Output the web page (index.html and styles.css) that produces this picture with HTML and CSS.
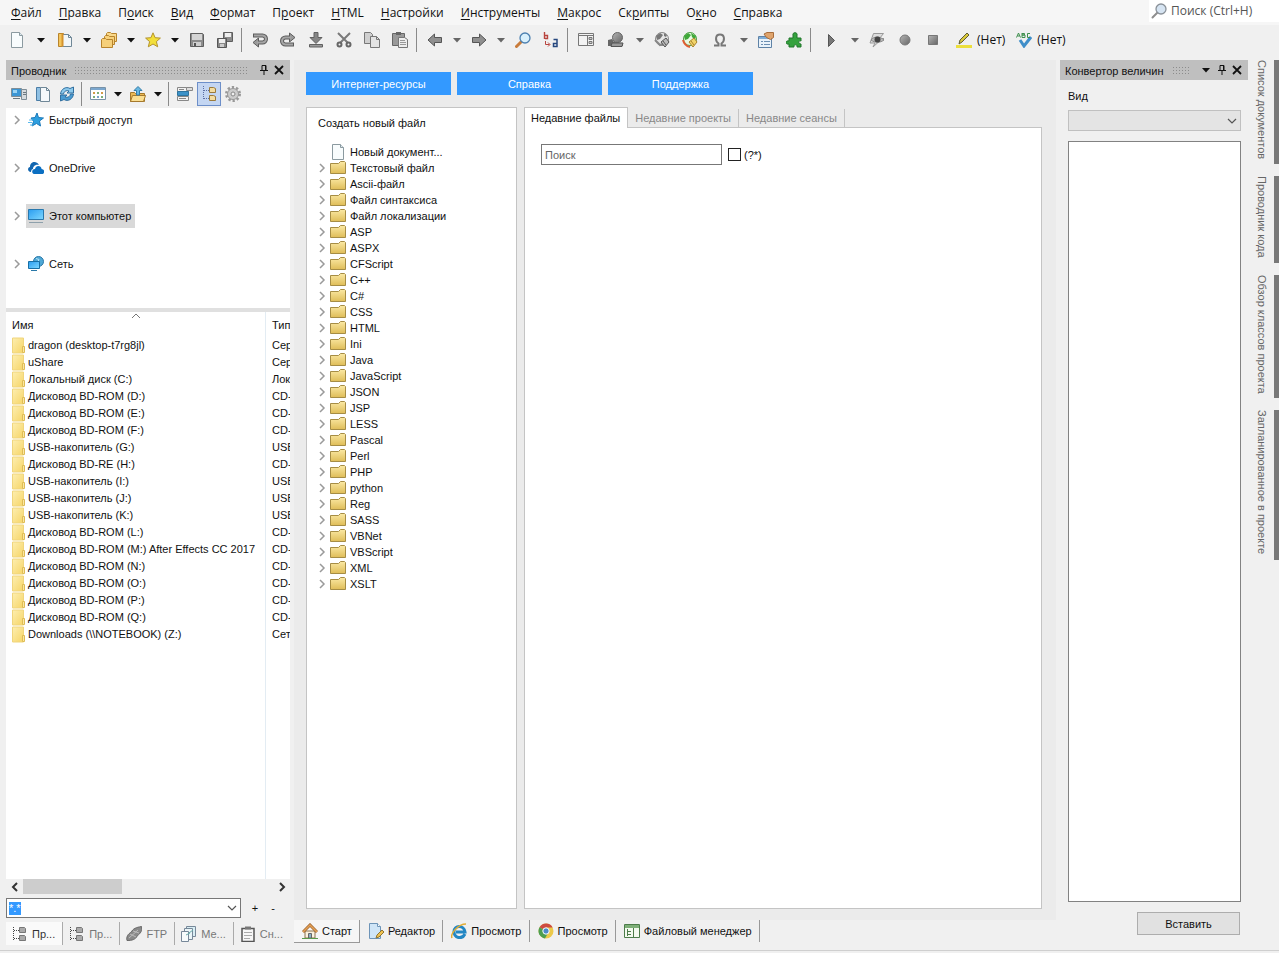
FILE: index.html
```
<!DOCTYPE html>
<html lang="ru">
<head>
    <meta charset="UTF-8">
    <meta name="viewport" content="width=device-width, initial-scale=1.0">
    <title>Редактор</title>
    <link rel="stylesheet" href="styles.css">
</head>
<body>
    <svg class="sprite" width="0" height="0">
        <defs>
            <linearGradient id="gold" x1="0" y1="0" x2="0" y2="1"><stop offset="0" stop-color="#fbe9a5"/><stop offset="1" stop-color="#dfbd58"/></linearGradient>
            <linearGradient id="pale" x1="0" y1="0" x2="1" y2="1"><stop offset="0" stop-color="#fdeeb0"/><stop offset="1" stop-color="#f6d567"/></linearGradient>
            <linearGradient id="grey" x1="0" y1="0" x2="1" y2="1"><stop offset="0" stop-color="#b5b5b5"/><stop offset="1" stop-color="#666"/></linearGradient>
            <linearGradient id="screen" x1="0" y1="0" x2="1" y2="1"><stop offset="0" stop-color="#2a9df0"/><stop offset="1" stop-color="#7fd8ff"/></linearGradient>
        </defs>
        <symbol id="i-new" viewBox="0 0 16 16"><path d="M2.500 .5h8l3 3v12h-11z" fill="#f8fcfd" stroke="#8b9aa0"/><path d="M10.500 .5v3h3" fill="#dfeaf0" stroke="#8b9aa0"/></symbol>
        <symbol id="i-open" viewBox="0 0 16 16"><path d="M1.500 1.500h5v13h-5z" fill="#f4c55c" stroke="#b8842c"/><path d="M5.500 2.500h6l3 3v9h-9z" fill="#f2f6f8" stroke="#6f8797"/><path d="M11.500 2.500v3h3" fill="none" stroke="#6f8797"/><path d="M5.500 1.500v13" stroke="#d4922c" stroke-width="2"/></symbol>
        <symbol id="i-folders" viewBox="0 0 16 16"><path d="M5.500 1.500l1-1h3l1 1h5v8h-10z" fill="#f9d88a" stroke="#b8842c"/><path d="M3.500 4.500l1-1h3l1 1h5v8h-10z" fill="#f8d27c" stroke="#b8842c"/><path d="M.5 7.500l1-1h3l1 1h6v8h-11z" fill="#f6d07a" stroke="#b8842c"/></symbol>
        <symbol id="i-star" viewBox="0 0 16 16"><path d="M8 .8l2.100 4.900 5.300.4-4 3.500 1.300 5.200L8 12l-4.700 2.800 1.300-5.200-4-3.500 5.300-.4z" fill="#f3df3a" stroke="#b4932c"/></symbol>
        <symbol id="i-save" viewBox="0 0 16 16"><path d="M1.500 1.500h12l1 1v12h-13z" fill="#8c8c8c" stroke="#5e5e5e"/><path d="M3 2h10v6H3z" fill="#d4d4d4"/><path d="M4 10h8v4H4z" fill="#cfcfcf"/><path d="M5 11h2v3H5z" fill="#555"/></symbol>
        <symbol id="i-saveall" viewBox="0 0 16 16"><path d="M6.500 .5h9v9h-9z" fill="#8c8c8c" stroke="#5e5e5e"/><path d="M8 1h6v4H8z" fill="#eee"/><path d="M.5 6.500h9v9h-9z" fill="#888" stroke="#555"/><path d="M2 7h6v4H2z" fill="#eee"/><path d="M3 12h4v3H3z" fill="#ccc"/></symbol>
        <symbol id="i-undo" viewBox="0 0 16 16"><path d="M1 3.500h9.500a3 3 0 0 1 0 7H6" fill="none" stroke="#5c5c5c" stroke-width="4"/><path d="M6.500 6v9L1 10.500z" fill="#9a9a9a" stroke="#5c5c5c"/><path d="M2 3.500h8.500a3 3 0 0 1 0 7H5" fill="none" stroke="#a5a5a5" stroke-width="2"/></symbol>
        <symbol id="i-redo" viewBox="0 0 16 16"><path d="M14 12.500H5.500a3 3 0 0 1 0-7H10" fill="none" stroke="#5c5c5c" stroke-width="4"/><path d="M9.500 1v9L15 5.500z" fill="#9a9a9a" stroke="#5c5c5c"/><path d="M13 12.500H5.500a3 3 0 0 1 0-7H11" fill="none" stroke="#a5a5a5" stroke-width="2"/></symbol>
        <symbol id="i-down" viewBox="0 0 16 16"><path d="M6 .5h4v5h4L8 11.500 2 5.500h4z" fill="#858585" stroke="#606060"/><path d="M1.500 12.500h13v2.500h-13z" fill="#9a9a9a" stroke="#606060"/></symbol>
        <symbol id="i-cut" viewBox="0 0 16 16"><path d="M2 1l10 10M14 1L4 11" stroke="#7a7a7a" stroke-width="2"/><circle cx="3.500" cy="12.500" r="2" fill="none" stroke="#666" stroke-width="2"/><circle cx="12.500" cy="12.500" r="2" fill="none" stroke="#666" stroke-width="2"/></symbol>
        <symbol id="i-copy" viewBox="0 0 16 16"><path d="M.5 .5h6l2 2v9h-8z" fill="#cfcfcf" stroke="#777"/><path d="M6.500 4.500h6l3 3v8h-9z" fill="#e3e3e3" stroke="#777"/><path d="M12.500 4.500v3h3" fill="none" stroke="#777"/></symbol>
        <symbol id="i-paste" viewBox="0 0 16 16"><path d="M.5 1.500h12v12H.5z" fill="#999" stroke="#666"/><path d="M4 0h5v3H4z" fill="#666"/><path d="M6.500 5.500h6l3 2v8h-9z" fill="#eee" stroke="#777"/><path d="M8 8.500h5M8 10.500h6M8 12.500h6" stroke="#999"/></symbol>
        <symbol id="i-back" viewBox="0 0 16 16"><path d="M7.500 2v3.500h7v5h-7V14L1 8z" fill="#8f8f8f" stroke="#555"/></symbol>
        <symbol id="i-fwd" viewBox="0 0 16 16"><path d="M8.500 2v3.500h-7v5h7V14L15 8z" fill="#8f8f8f" stroke="#555"/></symbol>
        <symbol id="i-find" viewBox="0 0 16 16"><path d="M1.500 14.500l5-5" stroke="#c97c3b" stroke-width="3" stroke-linecap="round"/><circle cx="10" cy="6" r="5" fill="#d9f0fc" stroke="#4d80b0" stroke-width="1.300"/></symbol>
        <symbol id="i-lens" viewBox="0 0 16 16"><path d="M1.500 14.500l5-5" stroke="#8e8e8e" stroke-width="2" stroke-linecap="round"/><circle cx="10" cy="6" r="5" fill="#d6e4f2" stroke="#8a9199" stroke-width="1.300"/></symbol>
        <symbol id="i-ba" viewBox="0 0 16 16"><path d="M1.500 0v7M2 3.500h2.500v3H2" fill="none" stroke="#b8443e" stroke-width="1.400"/><path d="M2.500 9v3.500h4M5 10.500l2 2-2 2" fill="none" stroke="#b8443e"/><path d="M10.500 7.500H14v7h-3.500v-3H14" fill="none" stroke="#26477e" stroke-width="1.500"/></symbol>
        <symbol id="i-layout" viewBox="0 0 16 16"><path d="M.5 1.500h15v12H.5z" fill="#f3f3f3" stroke="#777"/><path d="M1 3.500h14M9.500 4v9" stroke="#777"/><path d="M11 5.500h3v2h-3zM11 9.500h3v2h-3z" fill="#ccc" stroke="#777"/></symbol>
        <symbol id="i-user" viewBox="0 0 16 16"><path d="M0 8l4-1 2 3 9 1v3H0z" fill="#666"/><circle cx="9.500" cy="5.500" r="5" fill="url(#grey)" stroke="#666"/><path d="M4 11h11l-1 3.500H3z" fill="#999" stroke="#555"/></symbol>
        <symbol id="i-globe" viewBox="0 0 16 16"><circle cx="8" cy="7" r="6.500" fill="#e5e5e5" stroke="#888"/><path d="M2 4l4-3 3 2-3 4-3 1zM10 1l3 2-1 2-2-1z" fill="#777"/><path d="M1 8l5 5 3-1" fill="none" stroke="#888" stroke-width="2"/><path d="M7 10l5-4 3 4-4 5z" fill="#bbb" stroke="#555"/><path d="M9 9l3 4" stroke="#555"/></symbol>
        <symbol id="i-globe2" viewBox="0 0 16 16"><circle cx="8" cy="7" r="6.500" fill="#e9fae3" stroke="#4b9f42"/><path d="M2 4l4-3 3 2-3 4-3 1zM9 1l5 3-1 4-3-3z" fill="#3fa83a"/><path d="M1 8c1 4 3 6 7 7" fill="none" stroke="#df5e32" stroke-width="2"/><path d="M7 10l5-4 3 4-4 5z" fill="#f1d46a" stroke="#a9822a"/><path d="M9 9l3 4" stroke="#a9822a"/></symbol>
        <symbol id="i-omega" viewBox="0 0 16 16"><path d="M2 13.500h4.500v-2C3 9 3 2.500 8 2.500s5 6.500 1.500 9v2H14" fill="none" stroke="#777" stroke-width="2"/></symbol>
        <symbol id="i-props" viewBox="0 0 16 16"><path d="M.5 4.500h13v11H.5z" fill="#e9f2fa" stroke="#5e82a6"/><path d="M1 5h12v2H1z" fill="#7faed8"/><path d="M3 9.500h2M3 12.500h2M6 9.500h6M6 12.500h6" stroke="#6c8fb2"/><path d="M6 2l3-1.500h6.500v5l-3 2-4-2z" fill="#dfa46d" stroke="#a96d3b"/></symbol>
        <symbol id="i-puzzle" viewBox="0 0 16 16"><path d="M7 6V3c-1-3 5-3 4 0v3h4v3c-3-1-3 3 0 3v3h-4c1-3-4-3-3 0H3v-3c-4 1-4-4 0-3V6z" fill="#35a23e" stroke="#21762b"/></symbol>
        <symbol id="i-play" viewBox="0 0 16 16"><path d="M5.500 2.500v12l6-6z" fill="#777" stroke="#555"/></symbol>
        <symbol id="i-eye" viewBox="0 0 16 16"><path d="M4.500 1.500h10l-4 5H15l-6 4-5 4.500 2-4H1z" fill="#ddd" stroke="#999"/><path d="M2 8c3-4 9-4 13 0-4 3-9 3-13 0z" fill="#bbb" stroke="#888"/><circle cx="8.500" cy="7.500" r="3" fill="#444"/></symbol>
        <symbol id="i-rec" viewBox="0 0 16 16"><circle cx="8" cy="8" r="5" fill="url(#grey)" stroke="#777"/></symbol>
        <symbol id="i-stop" viewBox="0 0 16 16"><path d="M3.500 3.500h9v9h-9z" fill="url(#grey)" stroke="#777"/></symbol>
        <symbol id="i-marker" viewBox="0 0 16 16"><path d="M0 13h16v3H0z" fill="#ecdf3c"/><path d="M3 12l1-4 7-7 2 2-7 7z" fill="#d9c83a" stroke="#605c35"/></symbol>
        <symbol id="i-abc" viewBox="0 0 16 16"><path d="M4 8l4 6 7-9" fill="none" stroke="#3f8ec9" stroke-width="3"/><path d="M.5 5.500L2.500 1l2 4.500M1.500 4h2M6 1v4.500h3V3H6h2.500V1.500H6M14 1.500h-2.500v4H14" fill="none" stroke="#3d8e4d"/></symbol>
        <symbol id="i-pin" viewBox="0 0 10 12"><path d="M3 1.500h4v5H3zM1 6.500h8M5 7v4M6.500 1v6" fill="none" stroke="#111"/></symbol>
        <symbol id="i-close" viewBox="0 0 10 10"><path d="M1 1l8 8M9 1L1 9" stroke="#111" stroke-width="1.800"/></symbol>
        <symbol id="i-pc" viewBox="0 0 16 16"><path d="M.5 2.500h10v8H.5z" fill="#3c96d4" stroke="#7f8d96"/><path d="M2 4h4v3H2z" fill="#9cd4f4"/><path d="M10.500 3.500h5v10h-5z" fill="#d5dade" stroke="#7f8d96"/><path d="M12 6.500h3M12 8.500h3M2 12.500h7" stroke="#6b7880"/></symbol>
        <symbol id="i-docs" viewBox="0 0 16 16"><path d="M1.500 1.500h4v13h-4z" fill="#8fc0e3" stroke="#4b7da6"/><path d="M5.500 1.500h6l3 3v11h-9z" fill="#f4f8fb" stroke="#6f8797"/><path d="M11.500 1.500v3h3" fill="none" stroke="#6f8797"/></symbol>
        <symbol id="i-refresh" viewBox="0 0 16 16"><path d="M1.500 8C2 3 7 0 11 2.500L14.500 1v6H8l2-2C7 4 5 5.500 4.500 8z" fill="#8cc9ec" stroke="#316f9f"/><path d="M14.500 8C14 13 9 16 5 13.500L1.500 15V9H8l-2 2c3 1 5-.5 5.500-3z" fill="#499bd2" stroke="#316f9f"/></symbol>
        <symbol id="i-view" viewBox="0 0 16 16"><path d="M.5 1.500h15v12H.5z" fill="#fff" stroke="#7892a8"/><path d="M1 2h14v2H1z" fill="#7ba7ce"/><path d="M3 6h2v2H3zM11 6h2v2h-2z" fill="#d39b48"/><path d="M7 6h2v2H7zM3 10h2v2H3zM11 10h2v2h-2z" fill="#7cae79"/><path d="M7 10h2v2H7z" fill="#79a3cb"/></symbol>
        <symbol id="i-up" viewBox="0 0 16 16"><path d="M.5 6.500h4l1 1h9v8h-14z" fill="#eab955" stroke="#a5792c"/><path d="M.5 15.500l2-6h13l-2 6z" fill="#fbdf92" stroke="#a5792c"/><path d="M6.500 9V4.500H4L8 .5l4 4H9.500V9z" fill="#67b7e1" stroke="#347ca7"/></symbol>
        <symbol id="i-filter" viewBox="0 0 16 16"><path d="M.5 1.500h11v4H.5zM.5 10.500h11v4H.5z" fill="#f2f2f2" stroke="#888"/><path d="M.5 5.500h11v4H.5z" fill="#3c92c8" stroke="#2e749f"/><path d="M9.500 1.500h6v3h-6z" fill="#ddd" stroke="#888"/><path d="M2 12.500h7M2 3.500h5" stroke="#888"/></symbol>
        <symbol id="i-tree" viewBox="0 0 16 16"><path d="M2.500 0v14M3 4.500h5M3 12.500h5" stroke="#5d6fa4" stroke-dasharray="1 1"/><path d="M8.500 1.500h4l2 1v4h-6zM8.500 9.500h4l2 1v4h-6z" fill="#f3dc9f" stroke="#9b7a3b"/></symbol>
        <symbol id="i-treegrey" viewBox="0 0 16 16"><path d="M1.500 1v13M2 4.500h5M2 12.500h5" stroke="#444" stroke-dasharray="1 1"/><path d="M7.500 1.500h5l1 1v4h-6zM7.500 9.500h5l1 1v4h-6z" fill="#aaa" stroke="#777"/></symbol>
        <symbol id="i-gear" viewBox="0 0 16 16"><circle cx="8" cy="8" r="6.500" fill="none" stroke="#999" stroke-width="3" stroke-dasharray="2.200 1.900"/><circle cx="8" cy="8" r="5.500" fill="#ccc" stroke="#999"/><circle cx="8" cy="8" r="2" fill="#f0f0f0" stroke="#888"/></symbol>
        <symbol id="i-quick" viewBox="0 0 16 16"><path d="M9 1l1.500 4.500 5 .5-4 3 1 5-4-2.500L4 14l1.500-4.500L3 6l4-.5z" fill="#2d9fdf" stroke="#1b79ba"/><path d="M1 8h4M0 10.500h4M2 13h3" stroke="#5bb9ec"/></symbol>
        <symbol id="i-cloud" viewBox="0 0 16 16"><path d="M3 12C-1 12-.5 7 2 7c0-5 6-7 9-2-4-1-6 2-6 4-1 0-2 1-2 3z" fill="#1166b0"/><path d="M6 14c-3-1-2-5 1-5 1-5 7-3 6.500 0 3.500 0 3.500 5 .5 5z" fill="#0b6fc2"/></symbol>
        <symbol id="i-monitor" viewBox="0 0 16 16"><path d="M.5 1.500h15v10H.5z" fill="url(#screen)" stroke="#2978ad"/><path d="M1 14.500h14" stroke="#8ea0ab"/></symbol>
        <symbol id="i-net" viewBox="0 0 16 16"><circle cx="10.500" cy="5.500" r="5" fill="#4fa8d6" stroke="#2978a8"/><path d="M8 2.500l3 1-1 2" fill="none" stroke="#b6e3f6"/><path d="M.5 5.500h11v7H.5z" fill="url(#screen)" stroke="#176fa5"/><path d="M3 14.500h6" stroke="#2978a8"/></symbol>
        <symbol id="i-folder" viewBox="0 0 16 16"><path d="M.5 3.500h8l2-2h4l1 1v11H.5z" fill="url(#gold)" stroke="#a68d45"/></symbol>
        <symbol id="i-drive" viewBox="0 0 14 17"><path d="M.5 1h11v15H.5z" fill="url(#pale)" stroke="#f0d57c"/><path d="M10.500 9.500h2v6h-2z" fill="#fbe7a0" stroke="#dfbc55"/></symbol>
        <symbol id="i-chev" viewBox="0 0 8 10"><path d="M2 1l4 4-4 4" fill="none" stroke="#9a9a9a" stroke-width="1.500"/></symbol>
        <symbol id="i-chevd" viewBox="0 0 10 10"><path d="M1 3l4 4 4-4" fill="none" stroke="#555" stroke-width="1.200"/></symbol>
        <symbol id="i-chevu" viewBox="0 0 10 6"><path d="M1 5l4-4 4 4" fill="none" stroke="#777"/></symbol>
        <symbol id="i-left" viewBox="0 0 8 10"><path d="M6 1L2 5l4 4" fill="none" stroke="#333" stroke-width="2"/></symbol>
        <symbol id="i-right" viewBox="0 0 8 10"><path d="M2 1l4 4-4 4" fill="none" stroke="#333" stroke-width="2"/></symbol>
        <symbol id="i-caret" viewBox="0 0 8 5"><path d="M0 0h8L4 4.500z" fill="currentColor"/></symbol>
        <symbol id="i-ftp" viewBox="0 0 16 16"><path d="M1 14.500c-1-3 1-7 4-8 2-4 5-5 10.500-6 1 4-1 7-4 9-2 4-5 5-10.500 5z" fill="#8a8a8a" stroke="#666"/><path d="M4 8l6 3M7 5l6 2M3 12l9-8" stroke="#bbb"/></symbol>
        <symbol id="i-pages" viewBox="0 0 16 16"><path d="M5.500 .5h9v10h-9z" fill="#d9eef4" stroke="#789"/><path d="M3.500 2.500h8v11h-8z" fill="#eaf5f8" stroke="#789"/><path d="M.5 5.500h7v10h-7z" fill="#f7fbfc" stroke="#789"/><path d="M8 7l4-3M5 9l4-2" stroke="#6aa"/></symbol>
        <symbol id="i-clip" viewBox="0 0 16 16"><path d="M2 2.500h12v13H2z" fill="#f7f7f7" stroke="#555" stroke-width="1.500"/><path d="M5 .5h6v3H5z" fill="#777"/><path d="M4 6.500h8M4 9.500h8M4 12.500h6" stroke="#aaa"/></symbol>
        <symbol id="i-home" viewBox="0 0 16 16"><path d="M3 8h10v7H3z" fill="#fbf2df" stroke="#8c7350"/><path d="M6.500 10.500h3V15h-3z" fill="#8db0c7" stroke="#666"/><path d="M1 9l7-7 7 7" fill="none" stroke="#a06733" stroke-width="3"/><path d="M1 9l7-7 7 7" fill="none" stroke="#e5a155" stroke-width="1.500"/><path d="M0 15.500h16" stroke="#5a9a4b"/></symbol>
        <symbol id="i-edit" viewBox="0 0 16 16"><path d="M1.500 .5h8l3 3v12h-11z" fill="#cfe5f7" stroke="#6d94b8"/><path d="M9.500 .5v3h3" fill="#fff" stroke="#6d94b8"/><path d="M8 15l1-3 5-5 2 2-5 5z" fill="#f0c24f" stroke="#8f7430"/></symbol>
        <symbol id="i-ie" viewBox="0 0 16 16"><path d="M14 11c-3 6-11 4-11-2.500s10-7 11 .5H5" fill="none" stroke="#2387c4" stroke-width="3"/><path d="M1 15C-1 11 7 1 15 1" fill="none" stroke="#e2ad35" stroke-width="1.500"/></symbol>
        <symbol id="i-chrome" viewBox="0 0 16 16"><circle cx="8" cy="8" r="7.500" fill="#ecc94a"/><path d="M8 8L1.500 4.200A7.500 7.500 0 0 1 14.700 4.500H8z" fill="#ce4b42"/><path d="M8 8L1.500 4.200A7.500 7.500 0 0 0 7 15.400L10 10z" fill="#4c9e50"/><circle cx="8" cy="8" r="3.200" fill="#4c8bc9" stroke="#fff"/></symbol>
        <symbol id="i-fm" viewBox="0 0 16 16"><path d="M.5 1.500h15v13H.5z" fill="#f4faef" stroke="#4d7d4a"/><path d="M1 2h14v3H1z" fill="#7eaf78"/><path d="M9.500 5v9M3.500 6v7M4 8.500h3M4 11.500h3" stroke="#4d7d4a"/></symbol>
    </svg>

    <header class="menubar">
        <nav class="menu">
            <a href="#"><u>Ф</u>айл</a>
            <a href="#"><u>П</u>равка</a>
            <a href="#">П<u>о</u>иск</a>
            <a href="#"><u>В</u>ид</a>
            <a href="#"><u>Ф</u>ормат</a>
            <a href="#">П<u>р</u>оект</a>
            <a href="#"><u>H</u>TML</a>
            <a href="#"><u>Н</u>астройки</a>
            <a href="#"><u>И</u>нструменты</a>
            <a href="#"><u>М</u>акрос</a>
            <a href="#">Ск<u>р</u>ипты</a>
            <a href="#">О<u>к</u>но</a>
            <a href="#"><u>С</u>правка</a>
        </nav>
        <label class="quick-search">
            <svg class="icon"><use href="#i-lens"/></svg>
            <input type="text" placeholder="Поиск (Ctrl+H)" aria-label="Поиск">
        </label>
    </header>

    <div class="toolbar" id="toolbar"></div>

    <main class="workspace">
        <section class="explorer">
            <div class="panel-title">
                <h2>Проводник</h2>
                <span class="grip"></span>
                <button class="pin" aria-label="Закрепить"><svg><use href="#i-pin"/></svg></button>
                <button class="close" aria-label="Закрыть"><svg><use href="#i-close"/></svg></button>
            </div>
            <div class="explorer-tools" id="explorerTools"></div>
            <ul class="places">
                <li><svg class="chev"><use href="#i-chev"/></svg><a href="#"><svg class="icon"><use href="#i-quick"/></svg>Быстрый доступ</a></li>
                <li><svg class="chev"><use href="#i-chev"/></svg><a href="#"><svg class="icon"><use href="#i-cloud"/></svg>OneDrive</a></li>
                <li><svg class="chev"><use href="#i-chev"/></svg><a href="#" class="selected"><svg class="icon"><use href="#i-monitor"/></svg>Этот компьютер</a></li>
                <li><svg class="chev"><use href="#i-chev"/></svg><a href="#"><svg class="icon"><use href="#i-net"/></svg>Сеть</a></li>
            </ul>
            <div class="files">
                <table>
                    <thead>
                        <tr><th class="name"><svg class="sort"><use href="#i-chevu"/></svg>Имя</th><th>Тип</th></tr>
                    </thead>
                    <tbody id="drives"></tbody>
                </table>
            </div>
            <div class="scrollbar">
                <button aria-label="Влево"><svg><use href="#i-left"/></svg></button>
                <span class="thumb"></span>
                <button aria-label="Вправо"><svg><use href="#i-right"/></svg></button>
            </div>
            <div class="mask">
                <div class="combo">
                    <input type="text" value="*.*" aria-label="Маска">
                    <button aria-label="Список масок"><svg><use href="#i-chevd"/></svg></button>
                </div>
                <button>+</button>
                <button>-</button>
            </div>
            <div class="panel-tabs">
                <button class="active"><svg class="icon"><use href="#i-treegrey"/></svg>Пр...</button>
                <button><svg class="icon"><use href="#i-treegrey"/></svg>Пр...</button>
                <button><svg class="icon"><use href="#i-ftp"/></svg>FTP</button>
                <button><svg class="icon"><use href="#i-pages"/></svg>Ме...</button>
                <button><svg class="icon"><use href="#i-clip"/></svg>Сн...</button>
            </div>
        </section>

        <section class="center">
            <div class="start">
                <div class="links">
                    <button>Интернет-ресурсы</button>
                    <button>Справка</button>
                    <button>Поддержка</button>
                </div>
                <div class="boxes">
                    <div class="create">
                        <h2>Создать новый файл</h2>
                        <ul id="types">
                            <li><span class="chev"></span><svg class="icon"><use href="#i-new"/></svg>Новый документ...</li>
                        </ul>
                    </div>
                    <div class="recent">
                        <div class="recent-tabs">
                            <button class="active">Недавние файлы</button>
                            <button>Недавние проекты</button>
                            <button>Недавние сеансы</button>
                        </div>
                        <div class="recent-body">
                            <input class="search" type="text" placeholder="Поиск" aria-label="Поиск">
                            <input type="checkbox" id="regex">
                            <label for="regex">(?*)</label>
                        </div>
                    </div>
                </div>
            </div>
            <div class="doc-tabs">
                <button class="active"><svg class="icon"><use href="#i-home"/></svg>Старт</button>
                <button><svg class="icon"><use href="#i-edit"/></svg>Редактор</button>
                <button><svg class="icon"><use href="#i-ie"/></svg>Просмотр</button>
                <button><svg class="icon"><use href="#i-chrome"/></svg>Просмотр</button>
                <button><svg class="icon"><use href="#i-fm"/></svg>Файловый менеджер</button>
            </div>
        </section>

        <section class="converter">
            <div class="panel-title">
                <h2>Конвертор величин</h2>
                <span class="grip"></span>
                <button class="pin" aria-label="Меню"><svg class="caret"><use href="#i-caret"/></svg></button>
                <button class="pin" aria-label="Закрепить"><svg><use href="#i-pin"/></svg></button>
                <button class="close" aria-label="Закрыть"><svg><use href="#i-close"/></svg></button>
            </div>
            <div class="converter-body">
                <label for="kind">Вид</label>
                <div class="select">
                    <select id="kind" disabled></select>
                    <svg><use href="#i-chevd"/></svg>
                </div>
                <div class="units"></div>
                <button class="insert">Вставить</button>
            </div>
        </section>

        <nav class="side-tabs">
            <button>Список документов</button>
            <button>Проводник кода</button>
            <button>Обзор классов проекта</button>
            <button>Запланированное в проекте</button>
        </nav>
    </main>
    <footer class="status"></footer>

    <script>
        // name = icon, + = wide icon, v = arrow, V = wide arrow, d = grey arrow, | = separator
        const tools = 'new V open v folders v star v save saveall | undo redo down cut copy paste | back d fwd d find ba | layout user+ d globe globe2 omega+ d props puzzle | play+ d eye rec stop';
        const explorerTools = 'pc docs refresh | view v up v | filter tree! gear';

        function renderTools(list){
            return list.split(' ').map(t => {
                if(t === '|') return '<span class="sep"></span>';
                if(t === 'v' || t === 'V' || t === 'd'){
                    let cls = t === 'V' ? ' wide' : t === 'd' ? ' dim' : '';
                    return `<button class="drop${cls}" aria-label="Ещё"><svg class="caret"><use href="#i-caret"/></svg></button>`;
                }
                let cls = t.endsWith('+') ? ' wide' : t.endsWith('!') ? ' on' : '';
                let name = t.replace(/[+!]/, '');
                return `<button class="tool${cls}" aria-label="${name}"><svg class="icon"><use href="#i-${name}"/></svg></button>`;
            }).join('');
        }
        document.getElementById('toolbar').innerHTML = renderTools(tools) +
            `<button class="hl"><svg class="icon"><use href="#i-marker"/></svg>(Нет)</button>
             <button class="hl"><svg class="icon"><use href="#i-abc"/></svg>(Нет)</button>`;
        document.getElementById('explorerTools').innerHTML = renderTools(explorerTools);

        const drives = [
            ['dragon (desktop-t7rg8jl)', 'Сервер'],
            ['uShare', 'Сервер'],
            ['Локальный диск (C:)', 'Локальный диск'],
            ['Дисковод BD-ROM (D:)', 'CD-дисковод'],
            ['Дисковод BD-ROM (E:)', 'CD-дисковод'],
            ['Дисковод BD-ROM (F:)', 'CD-дисковод'],
            ['USB-накопитель (G:)', 'USB-накопитель'],
            ['Дисковод BD-RE (H:)', 'CD-дисковод'],
            ['USB-накопитель (I:)', 'USB-накопитель'],
            ['USB-накопитель (J:)', 'USB-накопитель'],
            ['USB-накопитель (K:)', 'USB-накопитель'],
            ['Дисковод BD-ROM (L:)', 'CD-дисковод'],
            ['Дисковод BD-ROM (M:) After Effects CC 2017', 'CD-дисковод'],
            ['Дисковод BD-ROM (N:)', 'CD-дисковод'],
            ['Дисковод BD-ROM (O:)', 'CD-дисковод'],
            ['Дисковод BD-ROM (P:)', 'CD-дисковод'],
            ['Дисковод BD-ROM (Q:)', 'CD-дисковод'],
            ['Downloads (\\\\NOTEBOOK) (Z:)', 'Сетевой диск']
        ];
        document.getElementById('drives').innerHTML = drives.map(d =>
            `<tr><td><svg class="drive"><use href="#i-drive"/></svg>${d[0]}</td><td>${d[1]}</td></tr>`).join('');

        const types = ['Текстовый файл', 'Ascii-файл', 'Файл синтаксиса', 'Файл локализации', 'ASP', 'ASPX', 'CFScript',
            'C++', 'C#', 'CSS', 'HTML', 'Ini', 'Java', 'JavaScript', 'JSON', 'JSP', 'LESS', 'Pascal', 'Perl', 'PHP',
            'python', 'Reg', 'SASS', 'VBNet', 'VBScript', 'XML', 'XSLT'];
        document.getElementById('types').innerHTML += types.map(t =>
            `<li><svg class="chev"><use href="#i-chev"/></svg><svg class="icon"><use href="#i-folder"/></svg>${t}</li>`).join('');
    </script>
</body>
</html>
```
FILE: styles.css
```
*{
    margin: 0;
    padding: 0;
    box-sizing: border-box;
}
body{
    display: flex;
    flex-direction: column;
    height: 100vh;
    overflow: hidden;
    background: #f0f0f0;
    color: #111;
    font: 11px/16px "Liberation Sans", Arial, sans-serif;
}
button, input, select{
    font: inherit;
    color: inherit;
    border: none;
    background: none;
    border-radius: 0;
    outline: none;
}
a{
    color: inherit;
    text-decoration: none;
}
ul{
    list-style: none;
}
h2{
    font-size: 11px;
    font-weight: normal;
}
svg{
    display: block;
    flex: none;
}
.sprite{
    position: absolute;
}
.icon{
    width: 16px;
    height: 16px;
}
.caret{
    width: 8px;
    height: 5px;
}
.chev{
    width: 8px;
    height: 10px;
    flex: none;
}

/* menu */
.menubar{
    display: flex;
    justify-content: space-between;
    height: 25px;
    background: #f6f6f6;
    font: 12px/16px "Open Sans", "Noto Sans", sans-serif;
}
.menu{
    display: flex;
    gap: 17px;
    padding: 5px 11px;
}
.menu u{
    text-underline-offset: 2px;
}
.quick-search{
    display: flex;
    align-items: center;
    gap: 4px;
    width: 130px;
    height: 22px;
    padding-left: 2px;
    background: #fff;
}
.quick-search input{
    width: 100px;
}
.quick-search input::placeholder{
    color: #555;
}

/* toolbars */
.toolbar{
    display: flex;
    align-items: center;
    height: 30px;
    margin-bottom: 5px;
    padding-left: 3px;
    font: 12px/16px "Open Sans", "Noto Sans", sans-serif;
}
.tool, .drop{
    display: flex;
    align-items: center;
    justify-content: center;
    flex: none;
    width: 28px;
    height: 24px;
}
.drop{
    width: 16px;
    color: #111;
}
.tool.wide{
    width: 32px;
}
.drop.wide{
    width: 20px;
}
.drop.dim{
    color: #666;
}
.sep{
    width: 1px;
    height: 24px;
    margin: 0 4px 0 2px;
    background: #8a8a8a;
}
.hl{
    display: flex;
    align-items: center;
    gap: 5px;
    height: 24px;
    margin-left: 9px;
    margin-right: 2px;
}

/* columns */
.workspace{
    display: grid;
    grid-template-columns: 284px 1fr 188px 27px;
    column-gap: 4px;
    flex: 1;
    min-height: 0;
    padding-left: 6px;
}
.workspace section{
    display: flex;
    flex-direction: column;
    min-width: 0;
    min-height: 0;
}
.panel-title{
    display: flex;
    align-items: center;
    height: 20px;
    padding: 0 4px 0 5px;
    background: #bfbfbf;
}
.panel-title h2{
    padding-top: 2px;
}
.grip{
    flex: 1;
    height: 8px;
    margin: 0 8px;
    background: radial-gradient(#8c8c8c 30%, transparent 40%) 0 0 / 3px 3px;
}
.pin, .close{
    display: flex;
    align-items: center;
    justify-content: center;
    width: 16px;
    height: 16px;
}
.pin svg{
    width: 10px;
    height: 12px;
}
.pin .caret{
    width: 8px;
    height: 5px;
}
.close{
    width: 14px;
}
.close svg{
    width: 10px;
    height: 10px;
}

/* explorer */
.explorer-tools{
    display: flex;
    align-items: center;
    height: 28px;
    flex: none;
    padding-left: 1px;
}
.explorer-tools .tool{
    width: 24px;
}
.tool.on{
    border: 1px solid #6d8fc9;
    background: #c4d6f2;
}
.places{
    flex: none;
    height: 200px;
    background: #fff;
}
.places li{
    display: flex;
    align-items: center;
    gap: 5px;
    height: 24px;
    margin-bottom: 24px;
    padding-left: 7px;
}
.places a{
    display: flex;
    align-items: center;
    gap: 5px;
    height: 24px;
    padding: 0 4px 0 2px;
}
.places .selected{
    background: #d9d9d9;
}
.files{
    flex: 1;
    min-height: 0;
    overflow: hidden;
    border-top: 4px solid #e0e0e0;
    background: linear-gradient(90deg, transparent 259px, #e3ecf3 259px, #e3ecf3 260px, transparent 260px) #fff;
}
table{
    border-collapse: collapse;
    table-layout: fixed;
    width: 460px;
}
th{
    height: 25px;
    padding-left: 6px;
    font-weight: normal;
    text-align: left;
    vertical-align: middle;
}
th.name{
    position: relative;
    width: 260px;
}
.sort{
    position: absolute;
    top: 1px;
    left: 125px;
    width: 10px;
    height: 6px;
}
td{
    height: 17px;
    padding-left: 6px;
    line-height: 17px;
    white-space: nowrap;
}
.drive{
    float: left;
    width: 14px;
    height: 17px;
    margin-right: 2px;
}
.scrollbar{
    display: flex;
    align-items: center;
    height: 15px;
}
.scrollbar button{
    display: flex;
    justify-content: center;
    width: 17px;
}
.scrollbar button:last-child{
    margin-left: auto;
}
.scrollbar svg{
    width: 8px;
    height: 10px;
}
.thumb{
    width: 99px;
    height: 15px;
    background: #cdcdcd;
}
.mask{
    display: flex;
    align-items: center;
    margin: 4px 0;
}
.mask > button{
    width: 18px;
}
.combo{
    display: flex;
    align-items: center;
    justify-content: space-between;
    width: 235px;
    height: 20px;
    margin-right: 5px;
    padding: 0 3px 0 2px;
    border: 1px solid #777;
    background: #fff;
}
.combo input{
    width: 12px;
    height: 13px;
    background: #3399ff;
    color: #fff;
}
.combo svg{
    width: 10px;
    height: 10px;
}
.panel-tabs{
    display: flex;
    height: 23px;
    color: #777;
}
.panel-tabs button{
    display: flex;
    align-items: center;
    gap: 4px;
    padding: 0 7px 0 6px;
    border-right: 1px solid #aaa;
}
.panel-tabs button:last-child{
    border: none;
}
.panel-tabs .active{
    background: #fafafa;
    color: #333;
}

/* start page */
.start{
    display: flex;
    flex-direction: column;
    flex: 1;
    min-height: 0;
    padding: 12px 14px 11px 12px;
    background: #ebebeb;
}
.links{
    display: flex;
    gap: 6px;
    margin-bottom: 12px;
}
.links button{
    width: 145px;
    height: 23px;
    background: #3399ff;
    color: #fff;
}
.boxes{
    display: flex;
    gap: 7px;
    flex: 1;
    min-height: 0;
}
.create{
    width: 211px;
    padding: 7px 11px;
    border: 1px solid #c4c4c4;
    background: #fff;
}
.create h2{
    margin-bottom: 13px;
}
.create li{
    display: flex;
    align-items: center;
    gap: 4px;
    height: 16px;
}
.recent{
    display: flex;
    flex-direction: column;
    flex: 1;
}
.recent-tabs{
    display: flex;
    height: 21px;
    margin-bottom: -1px;
    color: #888;
}
.recent-tabs button{
    height: 18px;
    margin-top: 2px;
    padding: 0 7px;
    border-right: 1px solid #c4c4c4;
}
.recent-tabs .active{
    position: relative;
    height: 21px;
    margin-top: 0;
    padding: 0 7px 0 6px;
    border: 1px solid #c4c4c4;
    border-bottom: none;
    background: #fff;
    color: #111;
}
.recent-body{
    display: flex;
    align-items: flex-start;
    flex: 1;
    padding: 16px;
    border: 1px solid #c4c4c4;
    background: #fff;
}
.search{
    width: 181px;
    height: 21px;
    padding: 0 3px;
    border: 1px solid #777;
}
.search::placeholder{
    color: #666;
}
#regex{
    appearance: none;
    width: 13px;
    height: 13px;
    margin: 4px 3px 0 6px;
    border: 1px solid #222;
}
.recent-body label{
    padding-top: 3px;
}
.doc-tabs{
    display: flex;
    height: 25px;
}
.doc-tabs button{
    display: flex;
    align-items: center;
    gap: 4px;
    height: 22px;
    padding: 0 7px 0 8px;
    border-right: 1px solid #999;
}
.doc-tabs .active{
    height: 23px;
    border-bottom: 1px solid #999;
    background: #f6f6f6;
}

/* converter */
.converter-body{
    display: flex;
    flex-direction: column;
    flex: 1;
    padding: 8px 7px 10px 8px;
}
.select{
    position: relative;
    margin: 6px 0 10px;
}
.select select{
    display: block;
    appearance: none;
    width: 100%;
    height: 21px;
    border: 1px solid #acacac;
    background: #e0e0e0;
}
.select svg{
    position: absolute;
    top: 6px;
    right: 4px;
    width: 10px;
    height: 10px;
}
.units{
    flex: 1;
    border: 1px solid #828282;
    background: #fff;
}
.insert{
    align-self: flex-end;
    width: 103px;
    height: 23px;
    margin: 10px 1px 0 0;
    border: 1px solid #adadad;
    background: #e1e1e1;
}

/* vertical tabs */
.side-tabs{
    display: flex;
    flex-direction: column;
    gap: 12px;
    color: #666;
}
.side-tabs button{
    writing-mode: vertical-rl;
    padding-bottom: 5px;
    padding-right: 3px;
    border-right: 5px solid #787878;
    text-align: left;
}
.status{
    height: 3px;
    margin-top: 5px;
    border-top: 1px solid #cfcfcf;
}
```
